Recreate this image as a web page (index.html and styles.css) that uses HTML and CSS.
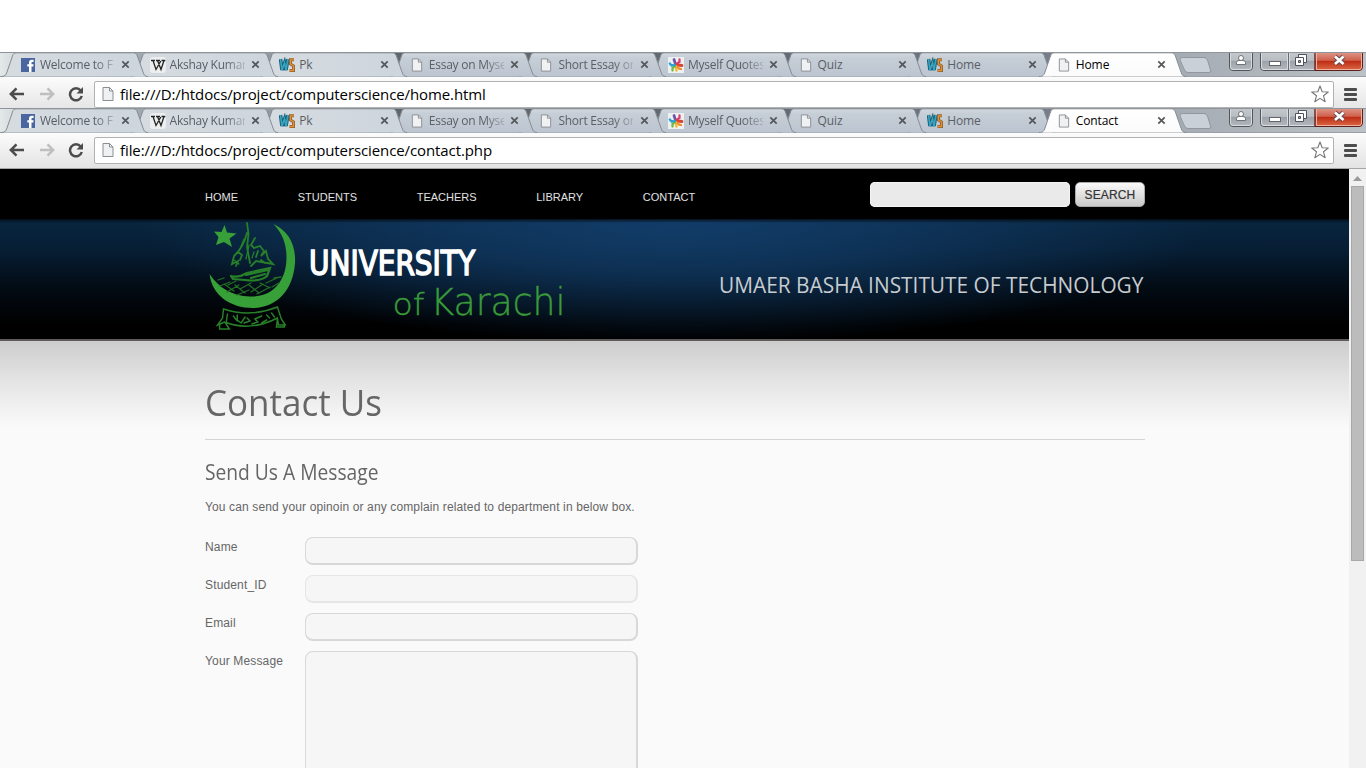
FILE: index.html
```html
<!DOCTYPE html>
<html lang="en">
<head>
<meta charset="utf-8">
<title>Contact</title>
<link rel="stylesheet" href="styles.css">
</head>
<body>
<svg class="defs" width="0" height="0">
  <defs>
    <linearGradient id="g-tab" x1="0" y1="0" x2="0" y2="1"><stop offset="0" stop-color="#d4dae0"/><stop offset=".2" stop-color="#c6ced7"/><stop offset="1" stop-color="#bcc5d0"/></linearGradient>
    <linearGradient id="g-light" x1="0" y1="0" x2="1" y2="0"><stop offset="0" stop-color="#d6dce0"/><stop offset="1" stop-color="#cdd5dd"/></linearGradient>
    <linearGradient id="g-active" x1="0" y1="0" x2="0" y2="1"><stop offset="0" stop-color="#fff"/><stop offset="1" stop-color="#fbfbfb"/></linearGradient>
    <symbol id="tab" viewBox="0 0 147 25"><path d="M0 24.500C4 24.500 5 23 6 20L11.500 4C12.300 1.700 13 .8 15.500.8H132C134.500.8 135.500 2 136.400 4L142 20C143 23 144 24.500 147 24.500" stroke="#868c94"/></symbol>
    <symbol id="i-page" viewBox="0 0 12 15"><path d="M1 1H7.500L11 4.500V14H1Z" fill="#f0f1f2" stroke="#8b8e91"/><path d="M7.500 1V4.500H11" fill="none" stroke="#8b8e91"/></symbol>
    <symbol id="i-fb" viewBox="0 0 14 14"><path fill="#4a66a0" d="M0 0H14V14H0Z"/><path fill="#fff" d="M8 14V8.500H6.300V6.200H8V4.600C8 2.800 9 1.800 10.800 1.800H12.600V4H11.400C10.700 4 10.500 4.300 10.500 5V6.200H12.600L12.300 8.500H10.500V14Z"/></symbol>
    <symbol id="i-wiki" viewBox="0 0 16 16"><rect width="16" height="16" rx="3" fill="#eceeef"/><path d="M1 3.500H5M6 3.500H10M11.500 3.500H15.300M3 3.500L6 12.500L10.800 4M7.500 3.500L11 12.500L14 3.500" fill="none" stroke="#252525" stroke-width="1.300"/></symbol>
    <symbol id="i-ws" viewBox="0 0 16 14"><path d="M1.500 1L3 12L5.500 5L7 12L9 1" fill="none" stroke="#17647f" stroke-width="3.600"/><path d="M1.500 1L3 12L5.500 5L7 12L9 1" fill="none" stroke="#3da3bd" stroke-width="1.600"/><path d="M15 1.800H11.500V6L14.500 8V12.500H10.500" fill="none" stroke="#95602b" stroke-width="3"/><path d="M15 1.800H11.500V6L14.500 8V12.500H10.500" fill="none" stroke="#e19139" stroke-width="1.300"/></symbol>
    <symbol id="i-star" viewBox="0 0 16 16"><rect width="16" height="16" fill="#eef1f2"/><g fill="none" stroke-width="2.300" stroke-linecap="round"><path d="M7.500 7L6 2.500" stroke="#6d55a8" stroke-width="2.700"/><path d="M8.500 7L11.500 5V2.500" stroke="#d73f75"/><path d="M9.500 8L14 8.500" stroke="#d84532" stroke-width="2.800"/><path d="M9 9.500L11 11.500L13 12" stroke="#ef8b28"/><path d="M8 10L8.500 13.500" stroke="#f3b42e"/><path d="M7 9L4.500 11V13.500" stroke="#75b843"/><path d="M6.500 8L3.500 8.500L1.800 6.500" stroke="#2c9fd6"/></g></symbol>
    <symbol id="i-x" viewBox="0 0 9 9"><path d="M1.300 1.300L7.700 7.700M7.700 1.300L1.300 7.700" stroke="#54575a" stroke-width="1.700"/></symbol>
    <symbol id="i-back" viewBox="0 0 16 14"><path d="M15 7H2M7.500 1.300L1.800 7L7.500 12.700" fill="none" stroke="currentColor" stroke-width="2.500"/></symbol>
    <symbol id="i-reload" viewBox="0 0 16 16"><path d="M12.700 4.500A6 6 0 1 0 13.800 10" fill="none" stroke="#4c4c4c" stroke-width="2.500"/><path d="M15 1V7.500H8.500Z" fill="#4c4c4c"/></symbol>
    <symbol id="i-fav" viewBox="0 0 18 18"><path d="M9 1L11.200 6.800L17.300 7L12.500 10.800L14.200 16.800L9 13.400L3.800 16.800L5.500 10.800L.7 7L6.800 6.800Z" fill="#fff" stroke="#777" stroke-width="1.100" stroke-linejoin="round"/></symbol>
    <symbol id="newtab" viewBox="0 0 33 17"><path d="M4.500.5H25Q27.500.5 28.500 3L31.500 13Q32.300 15.500 30 15.500H9Q6.500 15.500 5.500 13L1 3Q.5.5 4.500.5Z" fill="#c9d0d8" stroke="#90979f"/></symbol>
    <symbol id="winbtns" viewBox="0 0 136 20">
      <linearGradient id="g-btn" x1="0" y1="0" x2="0" y2="1"><stop offset="0" stop-color="#c5c9cd"/><stop offset=".45" stop-color="#b9bec3"/><stop offset=".5" stop-color="#9ca2a9"/><stop offset="1" stop-color="#b4babf"/></linearGradient>
      <linearGradient id="g-close" x1="0" y1="0" x2="0" y2="1"><stop offset="0" stop-color="#e0998b"/><stop offset=".45" stop-color="#cf604c"/><stop offset=".5" stop-color="#be2d14"/><stop offset="1" stop-color="#dc6a48"/></linearGradient>
      <path d="M1.500-1V14Q1.500 17.500 5 17.500H21Q24.500 17.500 24.500 14V-1Z" fill="url(#g-btn)" stroke="#52565b"/>
      <path d="M2.500 0V14Q2.500 16.500 5 16.500H21Q23.500 16.500 23.500 14V0" fill="none" stroke="#d9dcdf"/>
      <path d="M8.500 11.500V9.500Q8.500 7.500 11 7.500H15Q17.500 7.500 17.500 9.500V11.500Z" fill="#fff" stroke="#6e7378"/><circle cx="13" cy="5" r="2.500" fill="#fff" stroke="#6e7378"/>
      <path d="M32.500-1V14Q32.500 17.500 36 17.500H87V-1Z" fill="url(#g-btn)" stroke="#52565b"/>
      <path d="M87-1V17.500H131Q134.500 17.500 134.500 14V-1Z" fill="url(#g-close)" stroke="#5c2019"/>
      <path d="M33.500 0V14Q33.500 16.500 36 16.500H59.500V0M61.500 0V16.500H86" fill="none" stroke="#d9dcdf"/><path d="M88.500 0V16.500H131Q133.500 16.500 133.500 14V0" fill="none" stroke="#eeb1a2"/>
      <path d="M60.500 0V17" stroke="#686c71"/>
      <rect x="41.500" y="8.500" width="11" height="4" fill="#fff" stroke="#62666c"/>
      <path d="M70.500 1.500H78.500V9.500H70.500Z" fill="#fff" stroke="#4f545c"/><path d="M67.500 4.500H75.500V12.500H67.500Z" fill="#fff" stroke="#4f545c"/><path d="M70.500 7.500H72.500V9.500H70.500Z" fill="#a5abb1" stroke="#4f545c"/>
      <path d="M107 3.500L115.500 11M115.500 3.500L107 11" stroke="#5f4a4e" stroke-width="4.600"/><path d="M107 3.500L115.500 11M115.500 3.500L107 11" stroke="#fff" stroke-width="2.700"/>
    </symbol>
  </defs>
</svg>

<section class="chrome chrome-cut">
  <div class="strip">
    <div class="tab light"><svg class="shape"><use href="#tab"/></svg><svg class="ico"><use href="#i-fb"/></svg><span class="name fade">Welcome to F</span><svg class="x"><use href="#i-x"/></svg></div>
    <div class="tab light"><svg class="shape"><use href="#tab"/></svg><svg class="ico wide"><use href="#i-wiki"/></svg><span class="name fade">Akshay Kumar</span><svg class="x"><use href="#i-x"/></svg></div>
    <div class="tab light"><svg class="shape"><use href="#tab"/></svg><svg class="ico wide"><use href="#i-ws"/></svg><span class="name">Pk</span><svg class="x"><use href="#i-x"/></svg></div>
    <div class="tab"><svg class="shape"><use href="#tab"/></svg><svg class="ico"><use href="#i-page"/></svg><span class="name fade">Essay on Myse</span><svg class="x"><use href="#i-x"/></svg></div>
    <div class="tab"><svg class="shape"><use href="#tab"/></svg><svg class="ico"><use href="#i-page"/></svg><span class="name fade">Short Essay or</span><svg class="x"><use href="#i-x"/></svg></div>
    <div class="tab"><svg class="shape"><use href="#tab"/></svg><svg class="ico wide"><use href="#i-star"/></svg><span class="name fade">Myself Quotes</span><svg class="x"><use href="#i-x"/></svg></div>
    <div class="tab"><svg class="shape"><use href="#tab"/></svg><svg class="ico"><use href="#i-page"/></svg><span class="name">Quiz</span><svg class="x"><use href="#i-x"/></svg></div>
    <div class="tab"><svg class="shape"><use href="#tab"/></svg><svg class="ico wide"><use href="#i-ws"/></svg><span class="name">Home</span><svg class="x"><use href="#i-x"/></svg></div>
    <div class="tab active"><svg class="shape"><use href="#tab"/></svg><svg class="ico"><use href="#i-page"/></svg><span class="name">Home</span><svg class="x"><use href="#i-x"/></svg></div>
    <svg class="newtab"><use href="#newtab"/></svg>
    <svg class="winbtns"><use href="#winbtns"/></svg>
  </div>
  <div class="toolbar">
    <svg class="back"><use href="#i-back"/></svg><svg class="forward"><use href="#i-back"/></svg><svg class="reload"><use href="#i-reload"/></svg>
    <div class="address"><svg class="page"><use href="#i-page"/></svg><span class="url">file:///D:/htdocs/project/computerscience/home.html</span><svg class="fav"><use href="#i-fav"/></svg></div>
    <div class="menu"><i></i><i></i><i></i></div>
  </div>
</section>

<section class="chrome">
  <div class="strip">
    <div class="tab light"><svg class="shape"><use href="#tab"/></svg><svg class="ico"><use href="#i-fb"/></svg><span class="name fade">Welcome to F</span><svg class="x"><use href="#i-x"/></svg></div>
    <div class="tab light"><svg class="shape"><use href="#tab"/></svg><svg class="ico wide"><use href="#i-wiki"/></svg><span class="name fade">Akshay Kumar</span><svg class="x"><use href="#i-x"/></svg></div>
    <div class="tab light"><svg class="shape"><use href="#tab"/></svg><svg class="ico wide"><use href="#i-ws"/></svg><span class="name">Pk</span><svg class="x"><use href="#i-x"/></svg></div>
    <div class="tab"><svg class="shape"><use href="#tab"/></svg><svg class="ico"><use href="#i-page"/></svg><span class="name fade">Essay on Myse</span><svg class="x"><use href="#i-x"/></svg></div>
    <div class="tab"><svg class="shape"><use href="#tab"/></svg><svg class="ico"><use href="#i-page"/></svg><span class="name fade">Short Essay or</span><svg class="x"><use href="#i-x"/></svg></div>
    <div class="tab"><svg class="shape"><use href="#tab"/></svg><svg class="ico wide"><use href="#i-star"/></svg><span class="name fade">Myself Quotes</span><svg class="x"><use href="#i-x"/></svg></div>
    <div class="tab"><svg class="shape"><use href="#tab"/></svg><svg class="ico"><use href="#i-page"/></svg><span class="name">Quiz</span><svg class="x"><use href="#i-x"/></svg></div>
    <div class="tab"><svg class="shape"><use href="#tab"/></svg><svg class="ico wide"><use href="#i-ws"/></svg><span class="name">Home</span><svg class="x"><use href="#i-x"/></svg></div>
    <div class="tab active"><svg class="shape"><use href="#tab"/></svg><svg class="ico"><use href="#i-page"/></svg><span class="name">Contact</span><svg class="x"><use href="#i-x"/></svg></div>
    <svg class="newtab"><use href="#newtab"/></svg>
    <svg class="winbtns"><use href="#winbtns"/></svg>
  </div>
  <div class="toolbar">
    <svg class="back"><use href="#i-back"/></svg><svg class="forward"><use href="#i-back"/></svg><svg class="reload"><use href="#i-reload"/></svg>
    <div class="address"><svg class="page"><use href="#i-page"/></svg><span class="url">file:///D:/htdocs/project/computerscience/contact.php</span><svg class="fav"><use href="#i-fav"/></svg></div>
    <div class="menu"><i></i><i></i><i></i></div>
  </div>
</section>

<div class="view">
  <main class="site">
    <header class="top">
      <nav class="nav"><a>HOME</a><a>STUDENTS</a><a>TEACHERS</a><a>LIBRARY</a><a>CONTACT</a></nav>
      <div class="search"><div class="query"></div><div class="go">SEARCH</div></div>
    </header>
    <div class="banner">
      <svg class="logo" width="370" height="120" viewBox="0 0 370 120">
        <g fill="#38a038">
          <path d="M18.500 6L21 13.500L30.500 14.500L23.500 19.500L26 28L18 23L10 26L12.500 18L8 12.500L15.500 13Z"/>
          <path d="M67.500 5C82 12 90 25 89 44C87 73 69 89 47 89C24 89 6 76 3.500 55C13 69 26 77 44 77.500C64 78 77 66 80 46C82 29 78 16 67.500 5Z"/>
        </g>
        <g transform="translate(-6 2)" fill="none" stroke="#278029" stroke-width="1.800" stroke-linecap="round">
          <path d="M47 2L48.500 13L47 26L50 42M47 12Q43 27 34 35L32 43L38 40L36 45M38 31L42 34L40 39M55 17L51 24L54 27L60 25L64 30L61 35L66 30L68 38L73 43L56 40L51 45M58 30L56 36M61 39L65 42"/>
          <path d="M44 18L40 28M49 24L46 38M54 31L52 37M34 39L39 43" stroke-width="1.200"/>
          <path d="M31 55Q39 57 47 52L70 47L67 55Q60 61 45 59L33 58L31 55M46 54L68 49M51 57L65 53" stroke-width="2.200"/>
        </g>
        <g fill="none" stroke="#226e25" stroke-linecap="round">
          <path d="M12 61L18 59M14 67L24 63M22 66L30 62M21 73L33 66M34 70L45 64M31 76L43 71M45 73L57 65M51 75L64 68M60 64L71 59M66 68L73 64M68 59L75 58M18 65L28 72M29 66L39 74M43 66L53 74M54 64L64 69" stroke-width="1.300"/>
          <g transform="translate(-6 1) scale(.98 1)" stroke="#278029"><path d="M24 89Q51 98 79 87L83 99L87 105H80L79 98Q51 112 25 102L18 105L23 98ZM28 94L27 101M79 99L78 107H86V104M26 103L30 109H20V105" stroke-width="1.500"/>
          <path d="M34 96L38 101M38 95V100L42 103L46 97M45 103L51 101L48 98M53 104L59 102L56 99L63 96M63 103L68 100M68 95L71 98M73 93L76 97" stroke-width="1.500"/></g>
        </g>
        <text class="uni" x="103" y="55.500" textLength="166" lengthAdjust="spacingAndGlyphs">UNIVERSITY</text>
        <text class="kar" x="186.500" y="96" textLength="32" lengthAdjust="spacingAndGlyphs" font-size="31">of</text>
        <text class="kar" x="224.500" y="96" textLength="135" lengthAdjust="spacingAndGlyphs" font-size="37">Karachi</text>
      </svg>
      <div class="institute"><span>UMAER BASHA INSTITUTE OF TECHNOLOGY</span></div>
    </div>
    <div class="content">
      <h1><span>Contact Us</span></h1>
      <h2><span>Send Us A Message</span></h2>
      <p>You can send your opinoin or any complain related to department in below box.</p>
      <form class="form">
        <div class="row"><label>Name</label><div class="field"></div></div>
        <div class="row"><label>Student_ID</label><div class="field pale"></div></div>
        <div class="row"><label>Email</label><div class="field"></div></div>
        <div class="row"><label>Your Message</label><div class="field area"></div></div>
      </form>
    </div>
  </main>
  <aside class="scroll"><svg width="9" height="5"><path d="M0 5L4.500 0L9 5Z" fill="#9a9a9a"/></svg><div class="thumb"></div></aside>
</div>
</body>
</html>
```
FILE: styles.css
```css
* { box-sizing: border-box; }
body { margin: 0; padding-top: 52px; width: 1366px; height: 768px; overflow: hidden; background: #fff; font-family: "Liberation Sans", sans-serif; display: flex; flex-direction: column; }
svg { display: block; flex: none; }
.defs { position: absolute; }

.chrome { height: 61px; flex: none; overflow: hidden; border-bottom: 1px solid #a5a5a5; background: #eee; }
.chrome-cut { height: 56px; border-bottom: 0; }
.strip { position: relative; display: flex; height: 25px; border-top: 1px solid #8f959c; border-bottom: 1px solid #9ba0a7; background: linear-gradient(90deg, #e3e8e8 0, #a7aeb5 60px, #9a9fa6 260px, #60656d 360px, #646a73 780px, #737b86 1040px, #a5acb3 1180px, #bcc1c6 1366px); }
.tab { position: relative; flex: none; width: 129.6px; height: 25px; margin-top: -1px; padding-left: 21px; display: flex; align-items: center; fill: url(#g-tab); z-index: 1; }
.tab.light { fill: url(#g-light); }
.tab:nth-child(1) { z-index: 9; }
.tab:nth-child(2) { z-index: 8; }
.tab:nth-child(3) { z-index: 7; }
.tab:nth-child(4) { z-index: 6; }
.tab:nth-child(5) { z-index: 5; }
.tab:nth-child(6) { z-index: 4; }
.tab:nth-child(7) { z-index: 3; }
.tab:nth-child(8) { z-index: 2; }
.tab.active { z-index: 10; margin-left: 6px; fill: url(#g-active); padding-left: 14px; }
.shape { position: absolute; left: 1px; top: 0; width: 147px; height: 25px; }
.tab.active .shape { left: -4px; }
.ico { position: relative; width: 14px; height: 14px; margin-right: 5px; margin-top: 1px; }
.ico.wide { width: 16px; height: 16px; margin-left: -1px; margin-right: 4px; }
.name { position: relative; width: 75px; white-space: nowrap; font: 12px/18px "Open Sans", "Noto Sans", sans-serif; letter-spacing: -.1px; color: #5a5f66; }
.fade { letter-spacing: -.25px; -webkit-mask-image: linear-gradient(90deg, #000 55px, rgba(0,0,0,.25) 75px); mask-image: linear-gradient(90deg, #000 55px, rgba(0,0,0,.25) 75px); }
.active .name { color: #000; }
.x { position: relative; width: 9px; height: 9px; margin-left: 6.500px; }
.newtab { width: 33px; height: 17px; margin: 4px 0 0 7px; }
.winbtns { width: 136px; height: 20px; margin-left: auto; margin-right: 2px; }

.toolbar { display: flex; align-items: center; height: 35px; padding: 0 8px 1px 9px; background: linear-gradient(#fcfcfc, #e3e3e3); }
.back, .forward { width: 16px; height: 14px; color: #4c4c4c; }
.forward { margin-left: 14px; color: #bfbfbf; transform: scaleX(-1); }
.reload { width: 16px; height: 16px; margin-left: 13px; }
.address { display: flex; align-items: center; width: 1240px; height: 27px; margin-left: 10px; padding: 0 4px 0 7px; border: 1px solid #b2b2b2; border-radius: 2px; background: #fff; }
.page { width: 12px; height: 16px; }
.url { margin-left: 6px; font: 15px/24px "Open Sans", "Noto Sans", sans-serif; letter-spacing: -.1px; color: #000; white-space: nowrap; }
.fav { width: 18px; height: 18px; margin-left: auto; }
.menu { display: grid; gap: 2px; margin-left: 10px; }
.menu i { width: 13px; height: 3px; border-radius: 1px; background: #4d4d4d; }

.view { display: flex; flex: 1; min-height: 0; }
.site { width: 1349px; height: 599px; overflow: hidden; background: #fafafa; }
.top { display: flex; justify-content: space-between; height: 50px; padding: 13px 204px 0 205px; background: #000; }
.nav { display: flex; gap: 59.700px; padding-top: 8px; font-size: 11px; line-height: 14px; color: #e2e2e2; }
.search { display: flex; gap: 5px; }
.query { width: 200px; height: 25px; border-radius: 5px; background: #eaeaea; box-shadow: inset 0 0 1px 1px #f4f4f4; }
.go { width: 70px; height: 25px; border: 1px solid #aaa; border-radius: 5px; background: linear-gradient(#fafafa, #c8c8c8); color: #333; font-size: 12px; letter-spacing: .15px; line-height: 24px; text-align: center; -webkit-text-stroke: .2px #333; }
.banner { display: flex; justify-content: space-between; height: 122px; padding: 0 204px 0 206px; border-bottom: 2px solid #5f5a5a; background: linear-gradient(rgba(0,0,0,.7) 0, transparent 4px), radial-gradient(ellipse 540px 125px at 675px 0, #123d69 0, rgba(17,58,100,.7) 45%, transparent 100%), linear-gradient(#082640 0, #071e34 25%, #020a12 60%, #000 88%); }
.uni { font: 33px "DejaVu Sans", sans-serif; fill: #fff; stroke: #fff; stroke-width: 1.600px; }
.kar { font-family: "DejaVu Sans", sans-serif; font-weight: 200; fill: #3a9b39; stroke: #3a9b39; stroke-width: .4px; }
.institute { margin-top: 51px; width: 425px; font: 400 22px/28px "Open Sans", sans-serif; color: #c6ccd0; white-space: nowrap; }
.institute span { display: inline-block; transform-origin: 0 0; transform: translateX(-1px) scaleX(.948); }
.content { height: 430px; padding: 40px 204px 0 205px; background: linear-gradient(#cdcdcd 0, #e4e4e4 40px, #fafafa 86px); }
h1 { margin: 0; height: 59px; border-bottom: 1px solid #d4d4d4; font: 400 37px/42px "Open Sans", sans-serif; color: #666; }
h1 span, h2 span { display: inline-block; transform-origin: 0 0; white-space: nowrap; }
h1 span { transform: scaleX(.945); }
h2 { margin: 18px 0 0; font: 400 21px/28px "Open Sans", sans-serif; color: #666; }
h2 span { transform: scaleX(.915); }
p { margin: 13px 0 0; font-size: 12px; line-height: 16px; letter-spacing: .13px; color: #666; }
.form { display: grid; gap: 10px; margin-top: 22px; }
.row { display: flex; align-items: flex-start; }
label { width: 100px; padding-top: 2px; font-size: 12px; line-height: 16px; letter-spacing: .15px; color: #666; }
.field { width: 333px; height: 28px; border: 1px solid #d8d8d8; border-right-width: 2px; border-bottom-width: 2px; border-radius: 8px; background: #f6f6f6; }
.field.pale { border-color: #e6e6e6; }
.field.area { height: 180px; }
.scroll { display: flex; flex-direction: column; align-items: center; gap: 5px; width: 17px; padding-top: 7px; background: #f1f1f1; }
.thumb { width: 13px; height: 375px; border: 1px solid #a8a8a8; background: #bcbcbc; }
```
